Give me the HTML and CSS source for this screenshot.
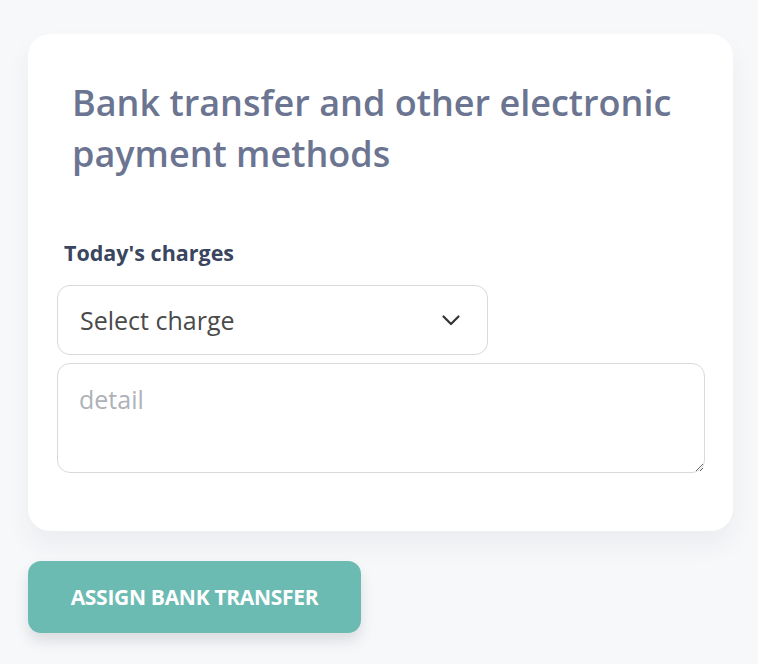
FILE: index.html
```html
<!DOCTYPE html>
<html lang="en">
<head>
<meta charset="utf-8">
<title>Bank transfer</title>
<link rel="stylesheet" href="styles.css">
</head>
<body>
<main class="page">
  <section class="card">
    <h2 class="card-title">Bank transfer and other electronic payment methods</h2>
    <label class="field-label" for="charge">Today's charges</label>
    <div class="select-wrap">
      <select id="charge" class="select">
        <option>Select charge</option>
      </select>
      <svg class="chevron" viewBox="0 0 20 20" width="20" height="20" aria-hidden="true">
        <path d="M2.5 6.5l7.5 7.5 7.5-7.5" fill="none" stroke="#333" stroke-width="2.2" stroke-linecap="round" stroke-linejoin="round"/>
      </svg>
    </div>
    <textarea class="detail" placeholder="detail"></textarea>
  </section>
  <button class="assign-btn" type="button">Assign bank transfer</button>
</main>
</body>
</html>
```
FILE: styles.css
```css
html, body {
  margin: 0;
  background: #f7f8fa;
  font-family: "Open Sans", "Noto Sans", sans-serif;
}

.page {
  padding: 34px 25px 30px 28px;
  display: flex;
  flex-direction: column;
  align-items: flex-start;
  gap: 30px;
}

.card {
  box-sizing: border-box;
  width: 705px;
  background: #ffffff;
  border-radius: 22px;
  padding: 43px 28px 58px 29px;
  box-shadow: 0 14px 26px rgba(40, 50, 70, 0.06);
  display: flex;
  flex-direction: column;
}

.card-title {
  margin: 0 0 0 15px;
  font-size: 36px;
  line-height: 51px;
  font-weight: 600;
  color: #6b7490;
}

.field-label {
  margin: 60px 0 18px 7px;
  font-size: 21.5px;
  line-height: 28px;
  font-weight: 700;
  color: #3a4560;
}

.select-wrap {
  position: relative;
  width: 431px;
}

.select {
  box-sizing: border-box;
  width: 100%;
  height: 70px;
  padding: 0 60px 0 22px;
  border: 1px solid #d7d9dc;
  border-radius: 13px;
  background: #ffffff;
  font-family: inherit;
  font-size: 25px;
  color: #4a4a4a;
  appearance: none;
  -webkit-appearance: none;
}

.chevron {
  position: absolute;
  right: 27px;
  top: 25px;
  pointer-events: none;
}

.detail {
  box-sizing: border-box;
  margin-top: 8px;
  width: 648px;
  height: 110px;
  padding: 18px 21px;
  border: 1px solid #d7d9dc;
  border-radius: 13px;
  font-family: inherit;
  font-size: 25px;
  color: #4a4a4a;
  resize: vertical;
}

.detail::placeholder {
  color: #aeb2b8;
}

.assign-btn {
  box-sizing: border-box;
  width: 333px;
  height: 72px;
  border: none;
  border-radius: 13px;
  background: #6cbbb3;
  color: #ffffff;
  font-family: inherit;
  font-size: 21px;
  font-weight: 700;
  text-transform: uppercase;
  letter-spacing: -0.3px;
  box-shadow: 0 8px 14px rgba(40, 60, 70, 0.14);
}
```
